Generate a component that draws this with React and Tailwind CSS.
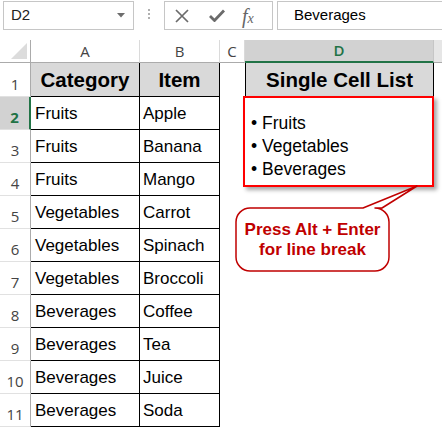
import React from "react";

const data = [
  ["Fruits", "Apple"],
  ["Fruits", "Banana"],
  ["Fruits", "Mango"],
  ["Vegetables", "Carrot"],
  ["Vegetables", "Spinach"],
  ["Vegetables", "Broccoli"],
  ["Beverages", "Coffee"],
  ["Beverages", "Tea"],
  ["Beverages", "Juice"],
  ["Beverages", "Soda"],
];

function FormulaBar() {
  return (
    <div className="flex h-[32px] items-start font-['Liberation_Sans',sans-serif]">
      {/* name box */}
      <div className="ml-[3px] mt-[1px] flex h-[29px] w-[131px] items-center justify-between border border-[#c6c6c6] pl-[7px] pr-[8px] text-[15px] text-[#222]">
        <span>D2</span>
        <svg width="8" height="5" viewBox="0 0 8 5">
          <path d="M0 0h8L4 4.5z" fill="#6d6d6d" />
        </svg>
      </div>
      <div className="ml-[14px] mt-[9px] flex flex-col gap-[2px]">
        <span className="h-[2px] w-[2px] bg-[#b0b0b0]" />
        <span className="h-[2px] w-[2px] bg-[#b0b0b0]" />
        <span className="h-[2px] w-[2px] bg-[#b0b0b0]" />
      </div>
      {/* buttons */}
      <div className="ml-[14px] mt-[1px] flex h-[29px] w-[109px] items-center border border-[#c6c6c6] pl-[10px]">
        <svg width="14" height="14" viewBox="0 0 14 14" className="mr-[20px]">
          <path d="M1 1l12 12M13 1L1 13" stroke="#6b6b6b" strokeWidth="1.7" />
        </svg>
        <svg width="16" height="13" viewBox="0 0 16 13" className="mr-[17px]">
          <path d="M1 7l4.5 4.5L15 1.5" stroke="#6b6b6b" strokeWidth="2.8" fill="none" />
        </svg>
        <span className="font-['Liberation_Serif',serif] text-[20px] italic leading-none text-[#666]">
          f<span className="text-[14px]">x</span>
        </span>
      </div>
      <div className="ml-[4px] mt-[1px] flex h-[29px] flex-1 items-center border border-r-0 border-[#c6c6c6] pl-[16px] text-[15px] text-black">
        Beverages
      </div>
    </div>
  );
}

export default function App() {
  const cellText = "font-['Liberation_Sans',Arial,sans-serif] text-[17px] text-black";
  const headText = "font-['Liberation_Sans',Arial,sans-serif] text-[20.5px] font-bold text-black";
  const colHead =
    "flex items-center justify-center border-b border-r border-b-[#ababab] border-r-[#dadada] bg-white font-['Open_Sans',sans-serif] text-[15px] text-[#444]";

  return (
    <div className="relative h-[431px] w-[442px] overflow-hidden bg-white">
      <FormulaBar />
      <div className="mt-[8px] grid grid-cols-[31px_109px_80px_25px_189px_1fr] grid-rows-[23px_34px_repeat(10,33px)]">
        {/* column headers */}
        <div className="relative border-b border-r border-b-[#ababab] border-r-[#ababab] bg-white">
          <svg width="16" height="16" viewBox="0 0 16 16" className="absolute bottom-[3px] right-[3px]">
            <path d="M16 0V16H0z" fill="#dcdcdc" />
          </svg>
        </div>
        <div className={colHead}>A</div>
        <div className={colHead}>B</div>
        <div className={colHead}>C</div>
        <div className="flex items-center justify-center border-b-2 border-r border-b-[#217346] border-r-[#c6c6c6] bg-[#d2d2d2] font-['Open_Sans',sans-serif] text-[15px] font-semibold text-[#217346]">
          D
        </div>
        <div className="border-b border-b-[#ababab] bg-[#e6e6e6]" />

        {/* row 1 */}
        <div className="flex items-end justify-center border-b border-r border-b-[#e1e1e1] border-r-[#ababab] pb-[1px] font-['Open_Sans',sans-serif] text-[15px] text-[#444]">
          1
        </div>
        <div className={`flex items-center justify-center border-b border-r border-black bg-[#d9d9d9] pt-[2px] ${headText}`}>
          Category
        </div>
        <div className={`flex items-center justify-center border-b border-r border-black bg-[#d9d9d9] pt-[2px] ${headText}`}>
          Item
        </div>
        <div />
        <div className={`flex items-center justify-center border-b border-l border-r border-black bg-[#d9d9d9] pt-[2px] ${headText}`}>
          Single Cell List
        </div>
        <div />

        {data.map(([cat, item], i) => {
          const n = i + 2;
          const active = n === 2;
          return (
            <React.Fragment key={n}>
              <div
                className={
                  active
                    ? "flex items-end justify-center border-b border-r-2 border-b-[#e1e1e1] border-r-[#217346] bg-[#d2d2d2] pb-[1px] font-['Open_Sans',sans-serif] text-[15px] font-bold text-[#217346]"
                    : "flex items-end justify-center border-b border-r border-b-[#e1e1e1] border-r-[#ababab] pb-[1px] font-['Open_Sans',sans-serif] text-[15px] text-[#444]"
                }
              >
                {n}
              </div>
              <div className={`flex items-center border-b border-r border-black pl-[4px] pt-[1px] ${cellText}`}>{cat}</div>
              <div className={`flex items-center border-b border-r border-black pl-[3px] pt-[1px] ${cellText}`}>{item}</div>
              <div />
              <div className={active ? "border-2 border-[#217346]" : ""} />
              <div />
            </React.Fragment>
          );
        })}
      </div>

      {/* text box over D2 */}
      <div className="absolute left-[243px] top-[96px] h-[91px] w-[191px] border-2 border-[#ff0000] bg-white pl-[6px] pt-[14px] shadow-[3px_3px_4px_rgba(0,0,0,0.35)] font-['Liberation_Sans',Arial,sans-serif] text-[17.5px] leading-[23px] text-black">
        <div>• Fruits</div>
        <div>• Vegetables</div>
        <div>• Beverages</div>
      </div>

      {/* callout */}
      <svg width="200" height="95" viewBox="0 0 200 95" className="absolute left-[230px] top-[180px]">
        <path
          d="M20 28 H133 L187 6 L152 28 H145 A14 14 0 0 1 159 42 V77 A14 14 0 0 1 145 91 H20 A14 14 0 0 1 6 77 V42 A14 14 0 0 1 20 28 Z"
          fill="white"
          stroke="#c00000"
          strokeWidth="1.5"
          strokeLinejoin="round"
        />
      </svg>
      <div className="absolute left-[236px] top-[208px] flex h-[63px] w-[153px] flex-col items-center justify-center font-['Liberation_Sans',Arial,sans-serif] text-[17px] font-bold leading-[20px] text-[#c00000]">
        <span>Press Alt + Enter</span>
        <span>for line break</span>
      </div>
    </div>
  );
}
